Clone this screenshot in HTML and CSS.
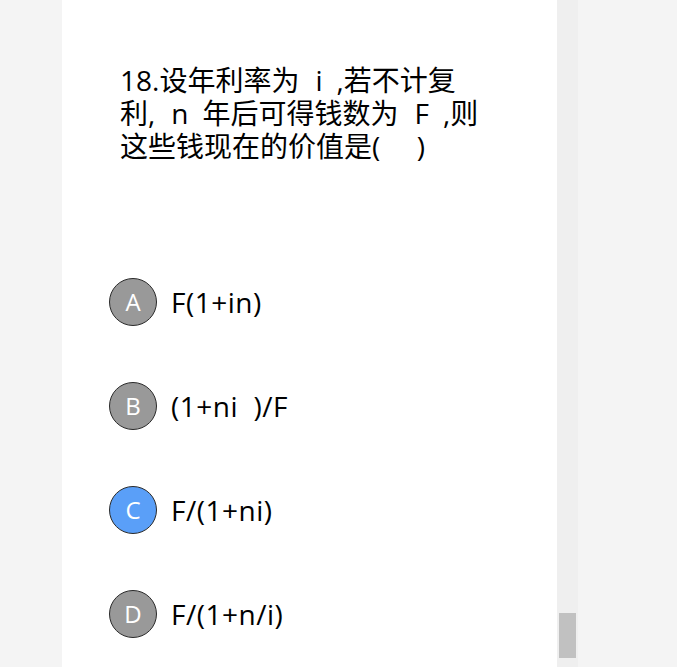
FILE: index.html
```html
<!DOCTYPE html>
<html lang="zh">
<head>
<meta charset="utf-8">
<title>题目</title>
<link rel="stylesheet" href="styles.css">
</head>
<body>
<div class="page">
  <main class="panel">
    <p class="question">18.设年利率为<span class="var">i</span>,若不计复利,<span class="var">n</span>年后可得钱数为<span class="var">F</span>,则这些钱现在的价值是(&nbsp;&nbsp;&nbsp;&nbsp;&nbsp;)</p>
    <ul class="options">
      <li class="option"><span class="badge">A</span><span class="opt-text">F(1+in)</span></li>
      <li class="option"><span class="badge">B</span><span class="opt-text">(1+ni&nbsp;&nbsp;)/F</span></li>
      <li class="option"><span class="badge badge-active">C</span><span class="opt-text">F/(1+ni)</span></li>
      <li class="option"><span class="badge">D</span><span class="opt-text">F/(1+n/i)</span></li>
    </ul>
  </main>
  <div class="scrollbar"><div class="thumb"></div></div>
</div>
</body>
</html>
```
FILE: styles.css
```css
html, body {
  margin: 0;
  padding: 0;
  height: 100%;
  overflow: hidden;
}
body {
  background: #f4f4f4;
  font-family: "Open Sans", "Noto Sans CJK SC", sans-serif;
  color: #000;
}
.page {
  display: flex;
  height: 667px;
  padding-left: 62px;
}
.panel {
  width: 495px;
  background: #fff;
  box-sizing: border-box;
  padding: 64px 0 0 47px;
}
.question {
  margin: 0 0 0 11px;
  width: 366px;
  font-size: 28px;
  line-height: 33px;
}
.var {
  display: inline-block;
  padding: 0 14px 0 16px;
}
.options {
  list-style: none;
  margin: 115px 0 0 0;
  padding: 0;
  display: flex;
  flex-direction: column;
  gap: 56px;
}
.option {
  display: flex;
  align-items: center;
  gap: 14px;
  height: 48px;
}
.badge {
  width: 46px;
  height: 46px;
  border-radius: 50%;
  border: 1px solid #2a2a2a;
  background: #999999;
  color: #fff;
  font-size: 24px;
  line-height: 1;
  display: flex;
  align-items: center;
  justify-content: center;
  flex-shrink: 0;
}
.badge-active {
  background: #5a9ff8;
}
.opt-text {
  font-size: 28px;
  letter-spacing: 0.5px;
}
.scrollbar {
  width: 21px;
  background: #efefef;
  display: flex;
  flex-direction: column;
  justify-content: flex-end;
  padding-bottom: 9px;
  box-sizing: border-box;
}
.thumb {
  width: 17px;
  height: 45px;
  margin-left: 2px;
  background: #c1c1c1;
}
```
